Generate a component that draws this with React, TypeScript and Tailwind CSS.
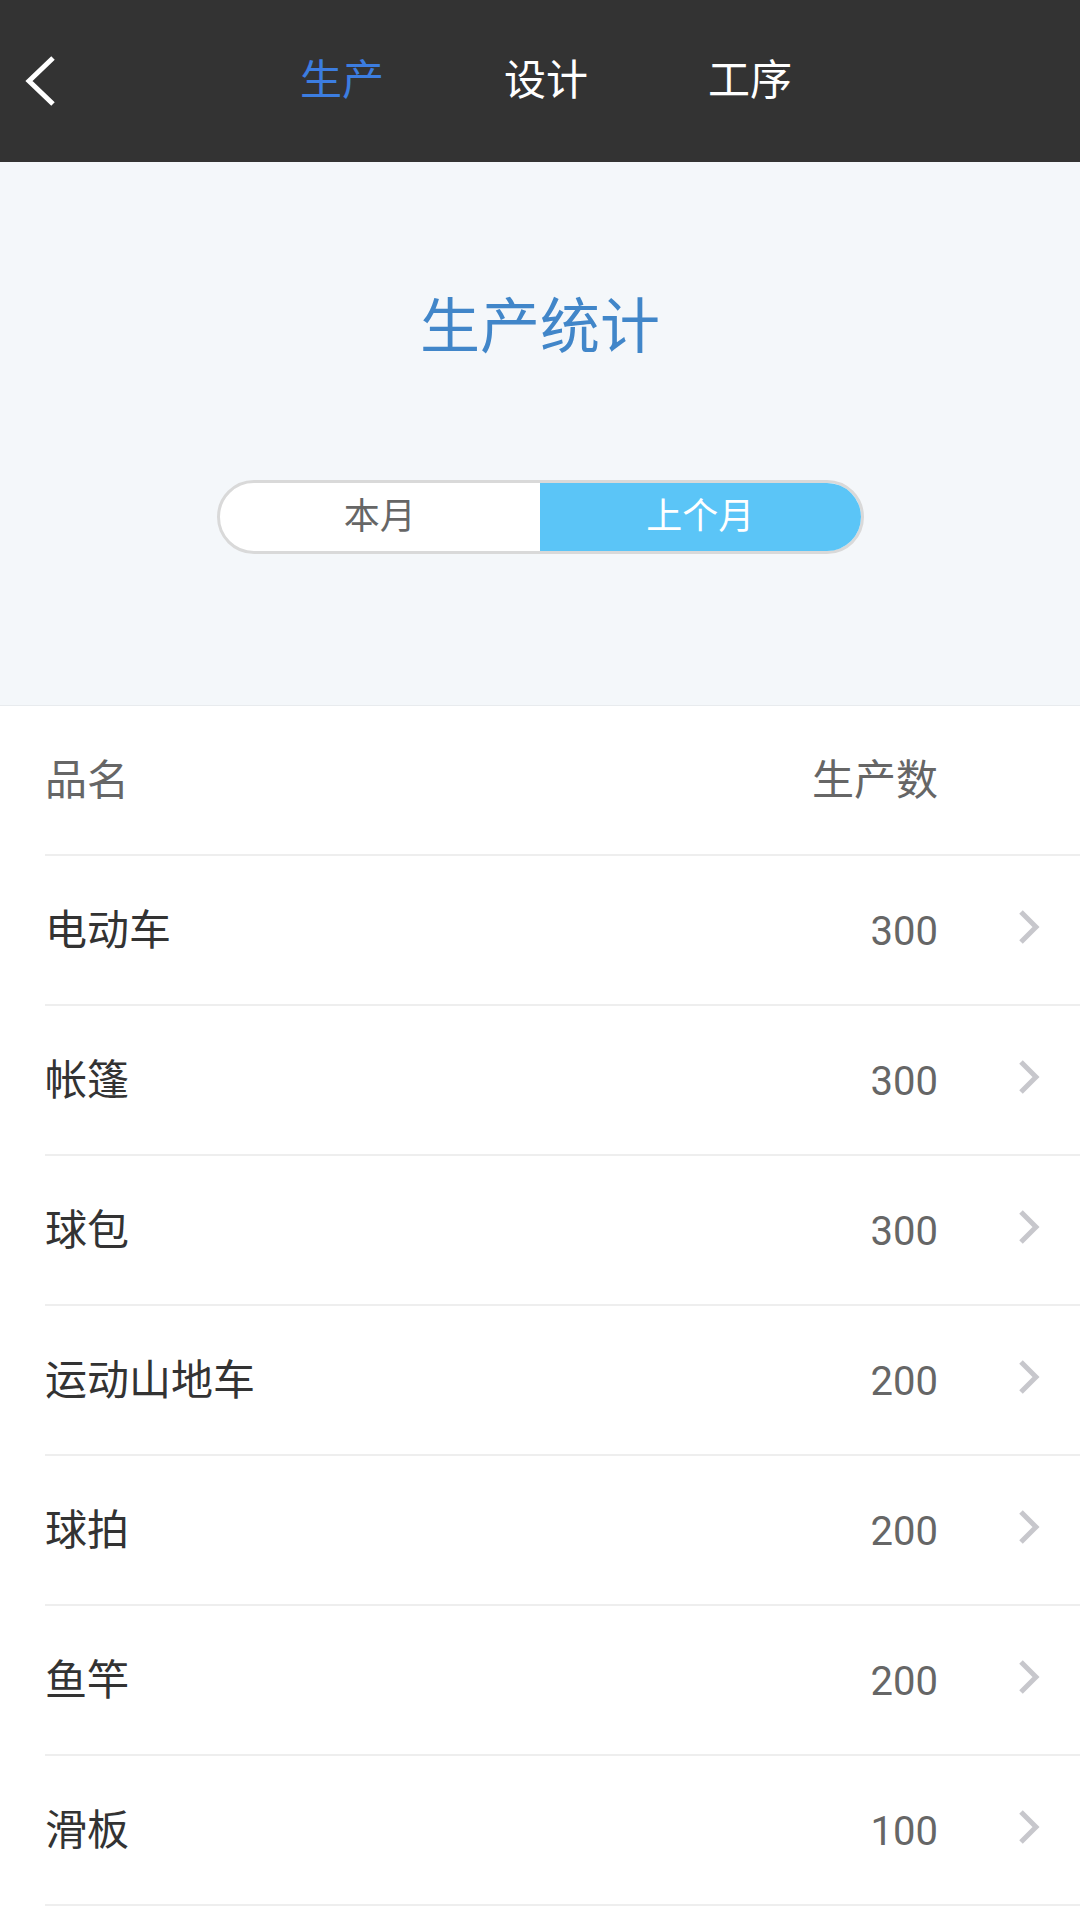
import React, { useState } from 'react';

const items = [
  { name: '电动车', count: 300 },
  { name: '帐篷', count: 300 },
  { name: '球包', count: 300 },
  { name: '运动山地车', count: 200 },
  { name: '球拍', count: 200 },
  { name: '鱼竿', count: 200 },
  { name: '滑板', count: 100 },
];

const tabs = ['生产', '设计', '工序'];

const Chevron = ({ hidden }: { hidden?: boolean }) => (
  <svg width="22" height="34" viewBox="0 0 22 34" className={hidden ? 'invisible' : ''}>
    <polyline points="3,2 18,17 3,32" fill="none" stroke="#c7c7cc" strokeWidth="5" />
  </svg>
);

const App = () => {
  const [tab, setTab] = useState(0);
  const [month, setMonth] = useState(1);

  return (
    <div className="w-[1080px] min-h-[1920px] bg-white font-['Roboto','Noto_Sans_CJK_SC',sans-serif]">
      {/* top bar */}
      <div className="h-[162px] bg-[#333333] flex items-center">
        <div className="w-[240px] pl-[24px] flex items-center">
          <svg width="32" height="52" viewBox="0 0 32 52">
            <polyline points="29,3 5,26 29,49" fill="none" stroke="#ffffff" strokeWidth="5" />
          </svg>
        </div>
        {tabs.map((t, i) => (
          <button
            key={t}
            onClick={() => setTab(i)}
            className={`w-[204px] text-center text-[42px] leading-[50px] ${tab === i ? 'text-[#3c7de0]' : 'text-white'}`}
          >
            {t}
          </button>
        ))}
      </div>

      {/* stats header */}
      <div className="h-[544px] bg-[#f4f7fa] border-b border-[#e8ebee] flex flex-col items-center">
        <h1 className="mt-[130px] text-[60px] leading-[72px] text-[#4186c9]">生产统计</h1>
        <div className="mt-[116px] w-[647px] h-[74px] rounded-full border-[3px] border-[#d9d9d9] bg-white overflow-hidden flex">
          <button
            onClick={() => setMonth(0)}
            className={`flex-1 text-[36px] ${month === 0 ? 'bg-[#5bc5f7] text-white' : 'text-[#666666]'}`}
          >
            本月
          </button>
          <button
            onClick={() => setMonth(1)}
            className={`flex-1 text-[36px] ${month === 1 ? 'bg-[#5bc5f7] text-white' : 'text-[#666666]'}`}
          >
            上个月
          </button>
        </div>
      </div>

      {/* list */}
      <div className="pl-[45px]">
        <div className="h-[150px] border-b-2 border-[#eeeeee] flex items-center text-[42px] text-[#666666]">
          <span className="flex-1">品名</span>
          <span>生产数</span>
          <span className="ml-[80px] mr-[40px] mb-[6px] flex">
            <Chevron hidden />
          </span>
        </div>
        {items.map((it) => (
          <div key={it.name} className="h-[150px] border-b-2 border-[#eeeeee] flex items-center">
            <span className="flex-1 text-[42px] text-[#333333]">{it.name}</span>
            <span className="text-[40px] text-[#666666] mt-[3px]">{it.count}</span>
            <span className="ml-[80px] mr-[40px] mb-[6px] flex">
              <Chevron />
            </span>
          </div>
        ))}
      </div>
    </div>
  );
};

export default App;
